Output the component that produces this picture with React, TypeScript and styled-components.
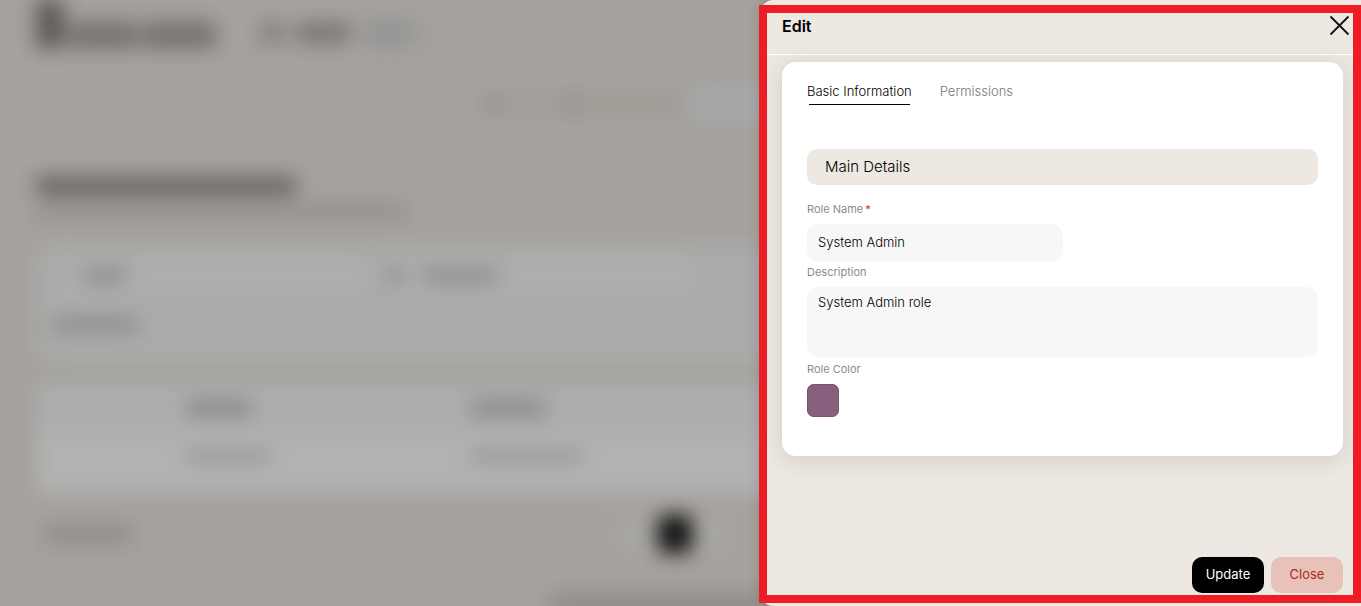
import React, { useState } from "react";
import styled, { createGlobalStyle } from "styled-components";

const GlobalStyle = createGlobalStyle`
  *, *::before, *::after { box-sizing: border-box; }
  body {
    margin: 0;
    background: #ede8e1;
    font-family: Inter, "Liberation Sans", sans-serif;
    color: #111;
  }
  button, input, textarea { font-family: inherit; }
`;

const Shell = styled.div`
  position: relative;
  height: 100vh;
  overflow: hidden;
`;

/* Page behind the drawer */

const Page = styled.div`
  display: flex;
  flex-direction: column;
  height: 100%;
  padding: 0 36px;
  filter: blur(10px);
`;

const Row = styled.div<{ $h: number; $gap?: number; $indent?: number; $align?: string }>`
  display: flex;
  flex: none;
  align-items: ${(p) => p.$align ?? "center"};
  gap: ${(p) => p.$gap ?? 0}px;
  height: ${(p) => p.$h}px;
  padding-left: ${(p) => p.$indent ?? 0}px;
`;

const Bar = styled.div<{ $w: number; $h?: number; $tone: number }>`
  flex: none;
  width: ${(p) => p.$w}px;
  height: ${(p) => p.$h ?? 14}px;
  border-radius: 4px;
  background: rgba(20, 20, 12, ${(p) => p.$tone});
`;

const Brand = styled.div`
  display: flex;
  align-items: flex-end;
  gap: 4px;
  width: 184px;
  height: 48px;
`;

const Pill = styled.div`
  width: 56px;
  height: 24px;
  border-radius: 12px;
  background: #d0d4d5;
`;

const LightButton = styled.div`
  flex: 1;
  height: 36px;
  border-radius: 12px;
  background: #eef1f2;
`;

const Filters = styled.div`
  flex: none;
  height: 120px;
  margin-top: 22px;
  padding: 11px 16px;
  border-radius: 12px;
  background: #f4f4f4;
`;

const FilterGrid = styled.div`
  display: grid;
  grid-template-columns: 310px 310px;
  gap: 20px;
  height: 40px;
`;

const FilterField = styled.div`
  display: flex;
  align-items: center;
  gap: 18px;
  padding-left: 4px;
  border-radius: 12px;
  background: #f9f9f9;
`;

const Listing = styled.div`
  flex: none;
  height: 112px;
  margin-top: 18px;
  border-radius: 12px;
  background: #fff;
`;

const ListingRow = styled.div<{ $head?: boolean }>`
  display: grid;
  grid-template-columns: 284px 1fr;
  align-items: center;
  height: ${(p) => (p.$head ? 52 : 44)}px;
  padding-left: 150px;
  border-radius: 12px 12px 0 0;
  background: ${(p) => (p.$head ? "#f8f8f8" : "#fff")};
`;

const Pager = styled.div`
  display: flex;
  flex: none;
  align-items: center;
  height: 80px;
  padding-left: 8px;
`;

const PageChip = styled.div<{ $current?: boolean }>`
  width: 34px;
  height: 38px;
  border-radius: 8px;
  background: ${(p) => (p.$current ? "#1a1a1a" : "#f0eeec")};
`;

const Chips = styled.div`
  display: flex;
  gap: 8px;
  margin-left: 484px;
`;

const Overlay = styled.div`
  position: absolute;
  inset: 0;
  background: rgba(0, 0, 0, 0.3);
`;

/* Drawer */

const Drawer = styled.section`
  position: absolute;
  top: 0;
  right: 0;
  bottom: 0;
  display: flex;
  flex-direction: column;
  width: 600px;
  max-width: 100%;
  border-radius: 12px 0 0 12px;
  background: #ede8e1;
  box-shadow: 0 0 14px rgba(0, 0, 0, 0.2);
`;

const Highlight = styled.div`
  position: absolute;
  inset: 5px 0 3px -2px;
  border: 8px solid #ee1c24;
  pointer-events: none;
`;

const DrawerHeader = styled.header`
  display: flex;
  justify-content: space-between;
  align-items: flex-start;
  height: 55px;
  padding: 15px 11px 0 21px;
  border-bottom: 1px solid #fff;
`;

const Title = styled.h2`
  margin: 0;
  font-size: 16px;
  line-height: 22px;
  font-weight: 600;
  color: #000;
`;

const IconButton = styled.button`
  display: flex;
  padding: 0;
  border: 0;
  background: none;
  cursor: pointer;
`;

const DrawerBody = styled.div`
  flex: 1;
  padding: 7px 18px 0 21px;
`;

const Card = styled.div`
  padding: 16px 25px 39px;
  border-radius: 14px;
  background: #fff;
  box-shadow: 0 4px 24px rgba(60, 50, 30, 0.14);
`;

const Tabs = styled.div`
  display: flex;
  gap: 28px;
  margin-bottom: 44px;
`;

const Tab = styled.button<{ $active: boolean }>`
  display: flex;
  flex-direction: column;
  align-items: center;
  padding: 0;
  border: 0;
  background: none;
  font-size: 13px;
  font-weight: 300;
  line-height: 26px;
  color: ${(p) => (p.$active ? "#000" : "#777")};
  cursor: pointer;

  &::after {
    content: "";
    width: calc(100% - 4px);
    height: 1px;
    background: ${(p) => (p.$active ? "#000" : "transparent")};
  }
`;

const SectionTitle = styled.h3`
  margin: 0 0 16px;
  padding: 0 18px;
  border-radius: 10px;
  background: #ede8e1;
  font-size: 15px;
  line-height: 36px;
  font-weight: 300;
  color: #000;
`;

const Label = styled.label`
  display: block;
  height: 23px;
  font-size: 11px;
  line-height: 16px;
  color: #8c8c8c;
`;

const Required = styled.span`
  margin-left: 2px;
  font-weight: 500;
  color: #d9371c;
`;

const TextInput = styled.input`
  display: block;
  width: 50%;
  height: 38px;
  margin-bottom: 2px;
  padding: 0 11px 2px;
  border: 0;
  border-radius: 12px;
  outline: none;
  background: #f7f7f7;
  font-size: 13px;
  font-weight: 300;
  color: #000;
`;

const TextArea = styled.textarea`
  display: block;
  width: 100%;
  height: 70px;
  margin-bottom: 4px;
  padding: 5px 11px;
  border: 0;
  border-radius: 12px;
  outline: none;
  resize: none;
  background: #f7f7f7;
  font-size: 13px;
  font-weight: 300;
  line-height: 20px;
  color: #000;
`;

const Swatch = styled.input`
  display: block;
  width: 32px;
  height: 33px;
  padding: 0;
  border: 0;
  border-radius: 7px;
  background: #885f7c;
  appearance: none;
  overflow: hidden;
  cursor: pointer;

  &::-webkit-color-swatch-wrapper { padding: 0; }
  &::-webkit-color-swatch { border: 1px solid #7b5270; border-radius: 7px; }
`;

const DrawerFooter = styled.footer`
  display: flex;
  justify-content: flex-end;
  gap: 7px;
  padding: 0 18px 13px;
`;

const Button = styled.button<{ $danger?: boolean }>`
  width: 72px;
  height: 36px;
  padding: 0 0 2px;
  border: 0;
  border-radius: 10px;
  background: ${(p) => (p.$danger ? "#e8c2b9" : "#000")};
  color: ${(p) => (p.$danger ? "#b02a16" : "#fff")};
  font-size: 13px;
  cursor: pointer;
`;

function RolesPage() {
  return (
    <Page aria-hidden="true">
      <Row $h={70} $align="flex-start">
        <Brand>
          <Bar $w={28} $h={48} $tone={0.48} />
          <Bar $w={70} $h={26} $tone={0.32} />
          <Bar $w={74} $h={26} $tone={0.32} />
        </Brand>
        <Row $h={66} $gap={12} $indent={40}>
          <Bar $w={24} $h={18} $tone={0.26} />
          <Bar $w={54} $h={18} $tone={0.32} />
          <Pill />
        </Row>
      </Row>
      <Row $h={68} $gap={10} $indent={450}>
        <Bar $w={20} $tone={0.12} />
        <Bar $w={36} $h={10} $tone={0.06} />
        <Bar $w={22} $tone={0.14} />
        <Bar $w={84} $h={12} $tone={0.08} />
        <LightButton />
      </Row>
      <Row $h={84} $align="flex-end">
        <div>
          <Row $h={28}>
            <Bar $w={260} $h={18} $tone={0.42} />
          </Row>
          <Row $h={22}>
            <Bar $w={370} $h={13} $tone={0.13} />
          </Row>
        </div>
      </Row>
      <Filters>
        <FilterGrid>
          <FilterField>
            <Bar $w={10} $tone={0.08} />
            <Bar $w={42} $tone={0.22} />
          </FilterField>
          <FilterField>
            <Bar $w={18} $tone={0.22} />
            <Bar $w={76} $tone={0.21} />
          </FilterField>
        </FilterGrid>
        <Row $h={60}>
          <Bar $w={86} $tone={0.2} />
        </Row>
      </Filters>
      <Listing>
        <ListingRow $head>
          <Bar $w={66} $tone={0.26} />
          <Bar $w={76} $tone={0.26} />
        </ListingRow>
        <ListingRow>
          <Bar $w={84} $h={12} $tone={0.17} />
          <Bar $w={112} $h={12} $tone={0.17} />
        </ListingRow>
      </Listing>
      <Pager>
        <Bar $w={88} $h={14} $tone={0.18} />
        <Chips>
          <PageChip />
          <PageChip $current />
          <PageChip />
        </Chips>
      </Pager>
      <Row $h={58} $indent={514}>
        <Bar $w={260} $h={14} $tone={0.2} />
      </Row>
    </Page>
  );
}

function CloseIcon() {
  return (
    <svg width="21" height="21" viewBox="0 0 21 21" fill="none" stroke="#111" strokeWidth="1.8">
      <path d="M1.5 1.5 19.5 19.5M19.5 1.5 1.5 19.5" />
    </svg>
  );
}

const TABS = ["Basic Information", "Permissions"];

export default function App() {
  const [tab, setTab] = useState(TABS[0]);

  return (
    <>
      <GlobalStyle />
      <Shell>
        <RolesPage />
        <Overlay />
        <Drawer role="dialog" aria-labelledby="drawer-title">
          <DrawerHeader>
            <Title id="drawer-title">Edit</Title>
            <IconButton type="button" aria-label="Close drawer">
              <CloseIcon />
            </IconButton>
          </DrawerHeader>
          <DrawerBody>
            <Card>
              <Tabs role="tablist">
                {TABS.map((name) => (
                  <Tab
                    key={name}
                    type="button"
                    role="tab"
                    aria-selected={tab === name}
                    $active={tab === name}
                    onClick={() => setTab(name)}
                  >
                    {name}
                  </Tab>
                ))}
              </Tabs>
              <SectionTitle>Main Details</SectionTitle>
              <Label htmlFor="role-name">
                Role Name<Required>*</Required>
              </Label>
              <TextInput id="role-name" defaultValue="System Admin" />
              <Label htmlFor="role-description">Description</Label>
              <TextArea id="role-description" defaultValue="System Admin role" />
              <Label htmlFor="role-color">Role Color</Label>
              <Swatch id="role-color" type="color" defaultValue="#885f7c" />
            </Card>
          </DrawerBody>
          <DrawerFooter>
            <Button type="button">Update</Button>
            <Button type="button" $danger>
              Close
            </Button>
          </DrawerFooter>
          <Highlight />
        </Drawer>
      </Shell>
    </>
  );
}
